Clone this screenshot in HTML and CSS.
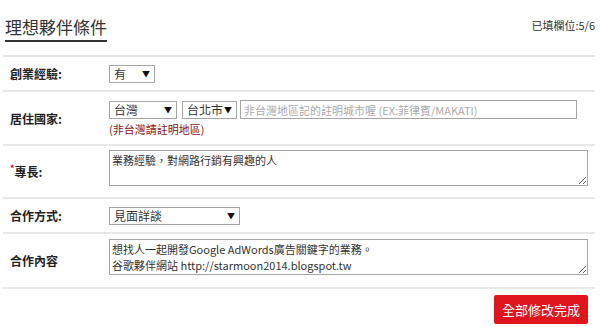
FILE: index.html
```html
<!DOCTYPE html>
<html lang="zh-Hant">
<head>
    <meta charset="UTF-8">
    <meta name="viewport" content="width=device-width, initial-scale=1.0">
    <title>理想夥伴條件</title>
    <link rel="stylesheet" href="styles.css">
</head>
<body>
    <div class="panel">
        <div class="panel-head">
            <h2 class="panel-title">理想夥伴條件</h2>
            <span class="progress">已填欄位:5/6</span>
        </div>

        <form id="partnerForm" class="partner-form">
            <div class="form-row">
                <label class="form-label">創業經驗:</label>
                <div class="form-field">
                    <span class="select-wrap">
                        <select class="form-select w-exp">
                            <option>有</option>
                            <option>無</option>
                        </select>
                    </span>
                </div>
            </div>

            <div class="form-row">
                <label class="form-label">居住國家:</label>
                <div class="form-field">
                    <div class="inline-group">
                        <span class="select-wrap">
                            <select class="form-select w-country">
                                <option>台灣</option>
                            </select>
                        </span>
                        <span class="select-wrap">
                            <select class="form-select w-city">
                                <option>台北市</option>
                            </select>
                        </span>
                        <input type="text" class="form-input w-area" placeholder="非台灣地區記的註明城市喔 (EX:菲律賓/MAKATI)">
                    </div>
                    <div class="note">(非台灣請註明地區)</div>
                </div>
            </div>

            <div class="form-row">
                <label class="form-label"><span class="required">*</span>專長:</label>
                <div class="form-field">
                    <textarea class="form-textarea">業務經驗，對網路行銷有興趣的人</textarea>
                </div>
            </div>

            <div class="form-row">
                <label class="form-label">合作方式:</label>
                <div class="form-field">
                    <span class="select-wrap">
                        <select class="form-select w-way">
                            <option>見面詳談</option>
                        </select>
                    </span>
                </div>
            </div>

            <div class="form-row row-tall">
                <label class="form-label">合作內容</label>
                <div class="form-field">
                    <textarea class="form-textarea">想找人一起開發Google AdWords廣告關鍵字的業務。
谷歌夥伴網站 http://starmoon2014.blogspot.tw</textarea>
                </div>
            </div>

            <div class="form-actions">
                <button type="submit" class="btn-save">全部修改完成</button>
            </div>
        </form>
    </div>
</body>
</html>
```

FILE: styles.css
```css
body {
    margin: 0;
    font-family: "Noto Sans CJK TC", "Noto Sans", sans-serif;
    color: #333;
    background: #fff;
}
.panel {
    margin: 0 5px 0 3px;
}
.panel-head {
    display: flex;
    justify-content: space-between;
    align-items: center;
    height: 36px;
    padding: 10px 0 9px;
    border-bottom: 2px solid #e4e4e4;
}
.panel-title {
    margin: 0 0 0 2px;
    font-size: 17px;
    font-weight: normal;
    line-height: 24px;
    padding-bottom: 1px;
    border-bottom: 2px solid #333;
}
.progress {
    font-size: 11px;
    line-height: 14px;
    margin-top: -6px;
}
.form-row {
    display: flex;
    align-items: center;
    padding: 8px 0 7px;
    border-bottom: 2px solid #e8e8e8;
}
.row-tall {
    padding-top: 9px;
    padding-bottom: 8px;
}
.form-label {
    width: 99px;
    padding-left: 7px;
    font-size: 12px;
    line-height: 16px;
    font-weight: bold;
    color: #222;
    flex-shrink: 0;
}
.required {
    color: #c00;
    font-size: 9px;
    vertical-align: top;
    line-height: 10px;
}
.form-field {
    flex: 1;
    display: flex;
    flex-direction: column;
    align-items: flex-start;
    padding-right: 7px;
}
.inline-group {
    display: flex;
    align-items: center;
    gap: 3px;
}
.select-wrap {
    position: relative;
    display: block;
}
.select-wrap::after {
    content: "▼";
    position: absolute;
    right: 5px;
    top: 4px;
    font-size: 8px;
    line-height: 10px;
    color: #111;
    pointer-events: none;
}
.form-select {
    appearance: none;
    -webkit-appearance: none;
    display: block;
    height: 18px;
    padding: 0 4px;
    border: 1px solid #a6a6a6;
    border-radius: 0;
    background: #fff;
    font-family: inherit;
    font-size: 12px;
    line-height: 16px;
    color: #333;
}
.w-exp { width: 46px; }
.w-country { width: 68px; }
.w-city { width: 55px; margin-left: 2px; }
.w-way { width: 131px; }
.form-input {
    width: 337px;
    height: 19px;
    box-sizing: border-box;
    padding: 0 3px;
    border: 1px solid #a6a6a6;
    font-family: inherit;
    font-size: 11px;
    color: #333;
}
.form-input::placeholder {
    color: #aaa;
}
.note {
    margin-top: 2px;
    font-size: 11px;
    color: #8b1010;
    line-height: 16px;
}
.form-textarea {
    display: block;
    align-self: stretch;
    box-sizing: border-box;
    height: 36px;
    margin: -4px 0 4px;
    padding: 1px 2px;
    border: 1px solid #a6a6a6;
    font-family: inherit;
    font-size: 11px;
    line-height: 16px;
    color: #333;
    resize: vertical;
}
.form-actions {
    display: flex;
    justify-content: flex-end;
    padding: 6px 7px 0 0;
}
.btn-save {
    width: 94px;
    height: 29px;
    background-color: #e0141d;
    color: #fff;
    border: none;
    border-radius: 2px;
    font-family: inherit;
    font-size: 13px;
    cursor: pointer;
}
```
